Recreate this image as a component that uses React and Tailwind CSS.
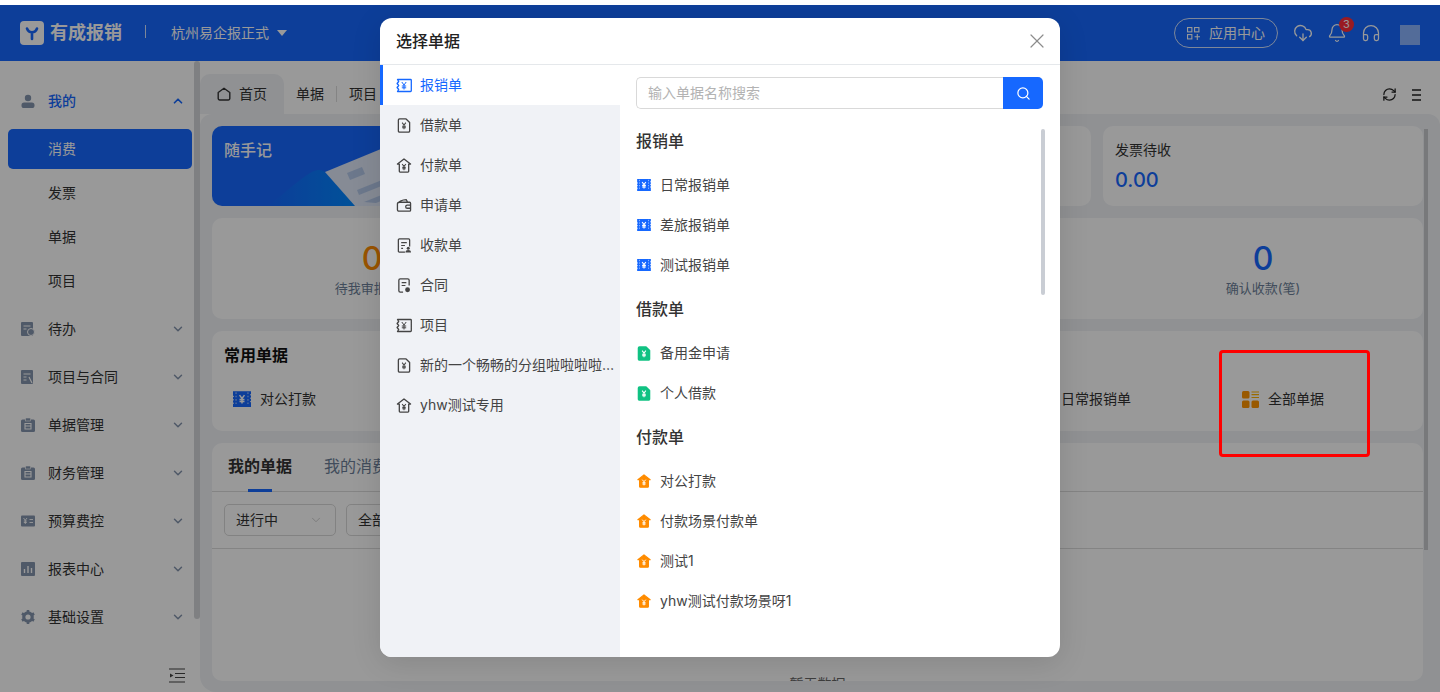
import React from "react";
import { ChevronDown, ChevronUp, Search, X, RefreshCw, CloudDownload, Bell, Headphones } from "lucide-react";

const FONT = "font-['Inter','Noto_Sans_CJK_SC',sans-serif]";

function Ticket({ className = "", solid }) {
  return (
    <svg viewBox="0 0 16 14" className={className}>
      {solid ? (
        <>
          <path d="M0 0h16v2.500l-1 .8 1 .8v1.400l-1 .8 1 .8v1.400l-1 .8 1 .8V14H0v-2.500l1-.8-1-.8V8.500l1-.8-1-.8V5.500l1-.8-1-.8z" fill="currentColor" />
          <path d="M2.700 1v12M13.300 1v12" stroke="#fff" strokeOpacity=".6" strokeWidth="1" strokeDasharray="1.500 1.500" />
        </>
      ) : (
        <path d="M1.500 1h13a.8.8 0 0 1 .8.8v10.400a.8.8 0 0 1-.8.8h-13l1.200-2-1.600-2 1.600-2-1.600-2 1.600-2z" fill="none" stroke="currentColor" strokeWidth="1.300" strokeLinejoin="round" />
      )}
      <path d="M5.800 3.500L8 6.500l2.200-3M8 6.500V11M5.800 7.500h4.400M5.800 9.300h4.400" fill="none" stroke={solid ? "#fff" : "currentColor"} strokeWidth={solid ? 1.300 : 1} />
    </svg>
  );
}
function Doc({ className = "", solid }) {
  return (
    <svg viewBox="0 0 14 16" className={className}>
      <path d="M2.200 1h7L13 4.800v9a1.200 1.200 0 0 1-1.200 1.200H2.200A1.200 1.200 0 0 1 1 13.800V2.200A1.200 1.200 0 0 1 2.200 1z" fill={solid ? "currentColor" : "none"} stroke="currentColor" strokeWidth="1.400" strokeLinejoin="round" />
      <path d="M5 5l2 2.600L9 5M7 7.600V12M5 8.700h4M5 10.300h4" fill="none" stroke={solid ? "#fff" : "currentColor"} strokeWidth="1.100" />
    </svg>
  );
}
function House({ className = "", solid }) {
  return (
    <svg viewBox="0 0 16 16" className={className}>
      <path d="M8 1L1 6.500h2v7.700a.8.8 0 0 0 .8.8h8.400a.8.8 0 0 0 .8-.8V6.500h2z" fill={solid ? "currentColor" : "none"} stroke="currentColor" strokeWidth="1.400" strokeLinejoin="round" />
      <path d="M6 6.500l2 2.300 2-2.300M8 8.800V13M6.200 10h3.600M6.200 11.500h3.600" fill="none" stroke={solid ? "#fff" : "currentColor"} strokeWidth="1.100" />
    </svg>
  );
}
function Wallet({ className = "" }) {
  return (
    <svg viewBox="0 0 16 16" fill="none" stroke="currentColor" strokeWidth="1.400" className={className}>
      <path d="M2 5.500C3 3.500 7 2 10.500 1.800l1.300 2.700M2.500 4.500H14a1 1 0 0 1 1 1V13a1 1 0 0 1-1 1H2.500A1.500 1.500 0 0 1 1 12.500V6a1.500 1.500 0 0 1 1.500-1.500z" strokeLinejoin="round" />
      <path d="M15 7.500h-3.500a1.700 1.700 0 0 0 0 3.400H15" />
    </svg>
  );
}
function Receipt({ className = "" }) {
  return (
    <svg viewBox="0 0 16 16" className={className}>
      <path d="M9 15H3a1 1 0 0 1-1-1V2a1 1 0 0 1 1-1h10a1 1 0 0 1 1 1v7" fill="none" stroke="currentColor" strokeWidth="1.400" />
      <path d="M5 5h6M5 8h4M5 11h2" stroke="currentColor" strokeWidth="1.300" />
      <circle cx="12.500" cy="11" r="1.600" fill="currentColor" />
      <path d="M9.500 15.500c0-2 1.200-2.800 3-2.800s3 .8 3 2.800z" fill="currentColor" />
    </svg>
  );
}
function Contract({ className = "" }) {
  return (
    <svg viewBox="0 0 16 16" className={className}>
      <path d="M7 15H4a1.500 1.500 0 0 1-1.500-1.500V2.500A1.500 1.500 0 0 1 4 1h8a1.500 1.500 0 0 1 1.500 1.500V8" fill="none" stroke="currentColor" strokeWidth="1.400" />
      <path d="M5.500 5h5M5.500 8h4" stroke="currentColor" strokeWidth="1.300" />
      <circle cx="11.800" cy="12.500" r="2.600" fill="currentColor" />
    </svg>
  );
}
function NavGlyph({ kind }) {
  const cls = "w-[14px] h-[14px] text-[#8494ad]";
  if (kind === "user")
    return (
      <svg viewBox="0 0 14 14" className={cls}>
        <circle cx="7" cy="4" r="3.200" fill="currentColor" />
        <rect x="0.500" y="8.500" width="13" height="5.500" rx="2.600" fill="currentColor" />
      </svg>
    );
  if (kind === "todo")
    return (
      <svg viewBox="0 0 14 14" className={cls}>
        <rect width="12" height="14" rx="1" fill="currentColor" />
        <path d="M2.500 4h7M2.500 7h3" stroke="#fff" strokeWidth="1.200" />
        <circle cx="10" cy="10" r="3.500" fill="currentColor" stroke="#fff" />
      </svg>
    );
  if (kind === "project")
    return (
      <svg viewBox="0 0 14 14" className={cls}>
        <rect width="12" height="14" rx="1" fill="currentColor" />
        <path d="M2.500 4h7M2.500 7h3M2.500 10h3M8 7l3 6" stroke="#fff" strokeWidth="1.200" />
      </svg>
    );
  if (kind === "clip")
    return (
      <svg viewBox="0 0 14 14" className={cls}>
        <rect y="1.500" width="14" height="12.500" rx="1.500" fill="currentColor" />
        <rect x="4.500" y="0" width="5" height="3" fill="currentColor" stroke="#fff" strokeWidth=".6" />
        <path d="M4 5.500h6v5.500H4zM4 8h6" fill="none" stroke="#fff" strokeWidth="1.100" />
      </svg>
    );
  if (kind === "budget")
    return (
      <svg viewBox="0 0 14 14" className={cls}>
        <rect y="1.500" width="14" height="11" rx="1" fill="currentColor" />
        <path d="M2.500 4l1.800 2.200L6 4M4.300 6.200V10M2.800 7h3M2.800 8.500h3M8.500 5.500h3.500M8.500 8.500h3.500" fill="none" stroke="#fff" strokeWidth=".9" />
      </svg>
    );
  if (kind === "chart")
    return (
      <svg viewBox="0 0 14 14" className={cls}>
        <rect width="14" height="14" rx="1" fill="currentColor" />
        <path d="M3.500 7v4M7 4v7M10.500 6v5" stroke="#fff" strokeWidth="1.400" />
      </svg>
    );
  return (
    <svg viewBox="0 0 14 14" className={cls}>
      <circle cx="7" cy="7" r="5.800" fill="currentColor" />
      <path d="M7 0v14M.9 3.500l12.200 7M.9 10.500l12.200-7" stroke="currentColor" strokeWidth="2.600" />
      <circle cx="7" cy="7" r="2.600" fill="#fff" />
    </svg>
  );
}

function NavItem({ kind, label, open, active }) {
  return (
    <div className="h-12 flex items-center pl-[21px] pr-[15px]">
      <span className="w-[27px] flex"><NavGlyph kind={kind} /></span>
      <span className={`flex-1 text-[14px] ${active ? "text-[#1668ff] font-medium" : "text-[#333]"}`}>{label}</span>
      {open ? (
        <ChevronUp className="w-[14px] h-[14px] text-[#1668ff]" strokeWidth={3} />
      ) : (
        <ChevronDown className="w-[14px] h-[14px] text-[#8494ad]" strokeWidth={2.500} />
      )}
    </div>
  );
}

function Sidebar() {
  return (
    <aside className="w-[200px] shrink-0 bg-white relative flex flex-col pt-4">
      <NavItem kind="user" label="我的" open active />
      <div className="px-2 pt-1">
        <div className="h-10 mb-1 rounded-[5px] bg-[#1668ff] text-white text-[14px] flex items-center pl-10">消费</div>
        {["发票", "单据", "项目"].map((t) => (
          <div key={t} className="h-10 mb-1 text-[14px] text-[#333] flex items-center pl-10">{t}</div>
        ))}
      </div>
      <NavItem kind="todo" label="待办" />
      <NavItem kind="project" label="项目与合同" />
      <NavItem kind="clip" label="单据管理" />
      <NavItem kind="clip" label="财务管理" />
      <NavItem kind="budget" label="预算费控" />
      <NavItem kind="chart" label="报表中心" />
      <NavItem kind="gear" label="基础设置" />
      <div className="absolute top-0 right-0 h-[558px] w-[6px] rounded-[3px] bg-[#d4d6d9]" />
      <svg viewBox="0 0 16 15" className="absolute left-[169px] top-[607px] w-4 h-[15px] text-[#444]">
        <path d="M0 1h16M6 5.500h10M6 9.500h10M0 14h16" stroke="currentColor" strokeWidth="1.200" />
        <path d="M1 5.500l3.500 2-3.500 2z" fill="currentColor" />
      </svg>
    </aside>
  );
}

function Header() {
  return (
    <header className="h-[56px] shrink-0 bg-[#1668ff] flex items-center text-white">
      <div className="pl-5 flex items-center">
        <span className="w-6 h-6 rounded-[4px] bg-white flex items-center justify-center">
          <svg viewBox="0 0 16 16" className="w-4 h-4"><path d="M3 3.500c1 2.800 3 3.800 5 3.800s4-1 5-3.800M8 7.300V14" fill="none" stroke="#1668ff" strokeWidth="2.600" strokeLinecap="round" /></svg>
        </span>
        <span className="ml-[6px] text-[18px] font-bold">有成报销</span>
        <span className="ml-[23px] w-px h-[13px] bg-white/80 mb-1" />
        <span className="ml-[25px] text-[14px]">杭州易企报正式</span>
        <span className="ml-2 w-0 h-0 border-x-[5px] border-x-transparent border-t-[6px] border-t-white" />
      </div>
      <div className="ml-auto flex items-center pr-[20px]">
        <div className="w-[104px] h-[30px] rounded-full border border-white/80 flex items-center justify-center text-[14px] mr-[15px]">
          <svg viewBox="0 0 12 12" className="w-[13px] h-[13px] mr-[9px]" fill="none" stroke="currentColor" strokeWidth="1"><rect x=".5" y=".5" width="4" height="4" /><rect x="7" y=".5" width="4" height="4" /><rect x=".5" y="7" width="4" height="4" /><path d="M7 9h5M9.500 6.500v5.500" /></svg>
          应用中心
        </div>
        <CloudDownload className="w-5 h-5" strokeWidth={1.600} />
        <span className="relative ml-[14px] flex">
          <Bell className="w-5 h-5" strokeWidth={1.500} />
          <span className="absolute -top-[6px] left-[12px] w-[15px] h-[15px] rounded-full bg-[#ff2d3a] text-[11px] leading-[15px] text-center">3</span>
        </span>
        <Headphones className="ml-[14px] w-5 h-5" strokeWidth={1.500} />
        <span className="ml-[19px] w-5 h-5 bg-white/50 mt-1" />
      </div>
    </header>
  );
}

function Stat({ label, color, value }) {
  return (
    <div className="w-[320px] flex flex-col items-center pt-[2px]">
      <div className={`text-[32px] leading-[36px] font-medium ${color}`}>{value}</div>
      <div className="text-[13px] leading-[20px] mt-[1px] text-[#6d7f99]">{label}</div>
    </div>
  );
}

function Main() {
  return (
    <main className="flex-1 min-w-0 bg-white flex flex-col relative">
      <div className="h-[53px] shrink-0 flex items-end relative">
        <div className="w-[84px] h-10 rounded-t-[10px] bg-[#f0f2f6] flex items-center justify-center text-[14px] text-[#333]">
          <svg viewBox="0 0 14 14" className="w-[14px] h-[14px] mr-[8px]" fill="none" stroke="currentColor" strokeWidth="1.400">
            <path d="M7 1.200L12.800 5.500V11.500a1.500 1.500 0 0 1-1.500 1.500H2.700a1.500 1.500 0 0 1-1.500-1.500V5.500z" strokeLinejoin="round" />
          </svg>
          首页
        </div>
        <div className="h-10 px-3 flex items-center text-[14px] text-[#333]">单据</div>
        <span className="w-px h-4 bg-[#ddd] mb-3" />
        <div className="h-10 px-3 flex items-center text-[14px] text-[#333]">项目</div>
        <div className="absolute right-[19px] top-[26px] flex items-center gap-[15px] text-[#222]">
          <RefreshCw className="w-[15px] h-[15px]" strokeWidth={2} />
          <svg viewBox="0 0 9 12" className="w-[9px] h-3"><path d="M0 1h9M0 6h9M0 11h9" stroke="currentColor" strokeWidth="1.300" /></svg>
        </div>
      </div>
      <div className="flex-1 min-h-0 rounded-t-[12px] rounded-bl-[16px] bg-[#f0f2f6] px-3 pt-3 flex flex-col gap-3 relative overflow-hidden">
        <div className="h-20 shrink-0 flex gap-3 mr-[5px]">
          <div className="w-[300px] rounded-[10px] bg-[#1668ff] relative overflow-hidden text-white text-[16px] p-3 pt-[14px] font-medium">
            随手记
            <svg viewBox="0 0 300 80" className="absolute left-0 top-0 w-[300px] h-20">
              <defs>
                <linearGradient id="swoop" x1="0" x2="1" y1="0" y2="0">
                  <stop offset="0" stopColor="#1668ff" />
                  <stop offset="1" stopColor="#0088ff" />
                </linearGradient>
              </defs>
              <path d="M55 80C70 70 85 55 98 47c6-4 12-4 16 0l30 33z" fill="url(#swoop)" />
              <path d="M113 46L220 2V80H143z" fill="#dfe8f8" />
              <path d="M135 47l15-6 3 7-15 6zM145 64l40-16 2 5-40 16zM152 76l40-16 2 5-30 12z" fill="#b4c8ea" />
            </svg>
          </div>
          <div className="flex-1 rounded-[10px] bg-white" />
          <div className="w-[320px] rounded-[10px] bg-white px-3 pt-[15px]">
            <div className="text-[14px] leading-[18px] text-[#333]">发票待收</div>
            <div className="text-[20px] leading-[24px] mt-[9px] font-medium text-[#1668ff]">0.00</div>
          </div>
        </div>
        <div className="h-[101px] shrink-0 rounded-[10px] bg-white mr-[5px] flex items-center justify-between">
          <Stat label="待我审批(笔)" color="text-[#ff8c00]" value="0" />
          <Stat label="确认收款(笔)" color="text-[#1668ff]" value="0" />
        </div>
        <div className="h-[100px] shrink-0 rounded-[10px] bg-white mr-[5px] relative px-3 pt-[14px]">
          <div className="text-[16px] leading-5 font-bold text-[#111]">常用单据</div>
          <div className="mt-[22px] flex items-center h-[24px] pl-[9px] pr-[87px]">
            <div className="flex items-center text-[14px] text-[#333]">
              <Ticket solid className="w-[18px] h-[16px] text-[#1668ff] mr-[9px]" />对公打款
            </div>
            <div className="flex items-center text-[14px] text-[#333] ml-auto mr-[111px]">日常报销单</div>
            <div className="flex items-center text-[14px] text-[#333]">
              <svg viewBox="0 0 17 17" className="w-[17px] h-[17px] mr-[9px]">
                <rect width="7.500" height="7.500" rx="1.500" fill="#ff9500" /><rect y="9.500" width="7.500" height="7.500" rx="1.500" fill="#ff9500" /><rect x="9.500" y="9.500" width="7.500" height="7.500" rx="1.500" fill="#ff9500" /><path d="M9.500 1h7.500M9.500 3.700h7.500M9.500 6.500h7.500" stroke="#ffb300" strokeWidth="1.200" />
              </svg>全部单据
            </div>
          </div>
        </div>
        <div className="h-[238px] shrink-0 rounded-[10px] bg-white mr-[5px] relative overflow-hidden">
          <div className="h-[49px] border-b border-[#ddd] flex pl-4 relative">
            <div className="text-[16px] font-semibold leading-[46px] text-[#333]">我的单据</div>
            <div className="text-[16px] leading-[46px] ml-[32px] text-[#6d7f99]">我的消费</div>
            <span className="absolute left-9 -bottom-px w-6 h-[3px] bg-[#1668ff]" />
          </div>
          <div className="h-[57px] border-b border-[#ddd] flex items-center pl-3 gap-[10px]">
            <div className="w-[112px] h-[32px] rounded-[5px] border border-[#d9d9d9] flex items-center pl-[11px] pr-3 text-[14px] text-[#333]">
              <span className="flex-1">进行中</span>
              <ChevronDown className="w-[14px] h-[14px] text-[#bbb]" strokeWidth={1.200} />
            </div>
            <div className="w-[112px] h-[32px] rounded-[5px] border border-[#d9d9d9] flex items-center pl-[11px] text-[14px] text-[#333]">全部</div>
          </div>
          <div className="absolute left-0 right-0 top-[231px] text-center text-[14px] leading-5 text-[#666]">暂无数据</div>
        </div>
        <div className="absolute right-[12px] top-[15px] h-[421px] w-[4px] bg-[#c8cacd]" />
      </div>
    </main>
  );
}

const LEFT = [
  [Ticket, "报销单", true],
  [Doc, "借款单"],
  [House, "付款单"],
  [Wallet, "申请单"],
  [Receipt, "收款单"],
  [Contract, "合同"],
  [Ticket, "项目"],
  [Doc, "新的一个畅畅的分组啦啦啦啦…"],
  [House, "yhw测试专用"],
];

const GROUPS = [
  { title: "报销单", Icon: Ticket, cls: "w-[14px] h-[12px] text-[#1668ff]", items: ["日常报销单", "差旅报销单", "测试报销单"] },
  { title: "借款单", Icon: Doc, cls: "w-[14px] h-[15px] text-[#10c283]", items: ["备用金申请", "个人借款"] },
  { title: "付款单", Icon: House, cls: "w-[14px] h-[14px] text-[#ff8c00]", items: ["对公打款", "付款场景付款单", "测试1", "yhw测试付款场景呀1"] },
];

function Modal() {
  return (
    <div className="absolute left-[380px] top-[18px] w-[680px] h-[639px] bg-white rounded-[12px] overflow-hidden flex flex-col shadow-[0_6px_30px_rgba(0,0,0,0.12)]">
      <div className="h-[47px] shrink-0 border-b border-[#e5e8eb] flex items-center justify-between pl-4 pr-[11px]">
        <span className="text-[16px] font-medium text-[#222]">选择单据</span>
        <X className="w-6 h-6 text-[#8c8c8c]" strokeWidth={1.200} />
      </div>
      <div className="flex-1 min-h-0 flex">
        <div className="w-[240px] shrink-0 bg-[#f0f2f6]">
          {LEFT.map(([I, t, active]) => (
            <div key={t} className={`h-10 flex items-center pr-[3px] text-[14px] whitespace-nowrap ${active ? "bg-white text-[#1668ff] border-l-[3px] border-[#1668ff] pl-[13px]" : "pl-4 text-[#444]"}`}>
              <I className="w-[16px] h-[15px] shrink-0 mr-2" />
              <span>{t}</span>
            </div>
          ))}
        </div>
        <div className="flex-1 min-w-0 relative pl-4 pr-[17px] pt-3">
          <div className="h-8 flex">
            <div className="flex-1 rounded-l-[5px] border border-[#d9d9d9] border-r-0 pl-[11px] flex items-center text-[14px] text-[#b3b3b3]">输入单据名称搜索</div>
            <div className="w-10 rounded-r-[5px] bg-[#1668ff] flex items-center justify-center">
              <Search className="w-[15px] h-[15px] text-white" strokeWidth={2} />
            </div>
          </div>
          <div className="mt-[13px]">
            {GROUPS.map(({ title, Icon, cls, items }) => (
              <div key={title}>
                <div className="h-[40px] pb-[2px] flex items-center text-[16px] font-medium text-[#333]">{title}</div>
                <div className="pt-[3px] pb-[5px]">
                  {items.map((t) => (
                    <div key={t} className="h-10 flex items-center text-[14px] text-[#444]">
                      <Icon solid className={`${cls} shrink-0 ml-px mr-[9px]`} />
                      {t}
                    </div>
                  ))}
                </div>
              </div>
            ))}
          </div>
          <div className="absolute right-[15px] top-[64px] w-[4px] h-[166px] rounded-full bg-[#c9cdd4]" />
        </div>
      </div>
    </div>
  );
}

export default function App() {
  return (
    <div className={`relative w-[1440px] h-[692px] overflow-hidden bg-white leading-5 ${FONT}`}>
      <div className="h-[5px]" />
      <div className="h-[687px] flex flex-col">
        <Header />
        <div className="flex-1 min-h-0 flex">
          <Sidebar />
          <Main />
        </div>
      </div>
      <div className="absolute inset-x-0 top-[5px] bottom-0 bg-black/40" />
      <Modal />
      <div className="absolute left-[1219px] top-[350px] w-[151px] h-[107px] border-[3px] border-[#f00] rounded-[4px]" />
    </div>
  );
}
